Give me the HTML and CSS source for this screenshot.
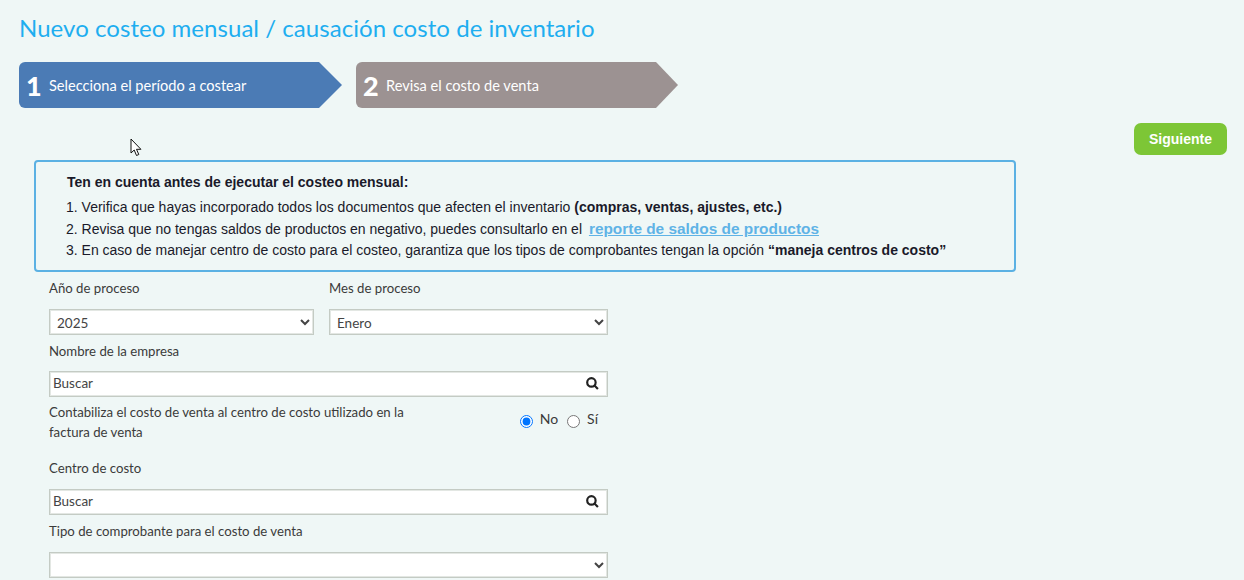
FILE: index.html
```html
<!DOCTYPE html>
<html lang="es">
<head>
<meta charset="utf-8">
<title>Nuevo costeo mensual</title>
<link rel="stylesheet" href="styles.css">
</head>
<body>
<main class="page">
  <h1 class="title">Nuevo costeo mensual / causación costo de inventario</h1>
  <ol class="steps">
    <li class="step step-active"><span class="step-num">1</span><span class="step-text">Selecciona el período a costear</span></li>
    <li class="step step-idle"><span class="step-num">2</span><span class="step-text">Revisa el costo de venta</span></li>
  </ol>
  <div class="actions"><button class="next" type="button">Siguiente</button></div>
  <section class="notice">
    <p class="notice-title">Ten en cuenta antes de ejecutar el costeo mensual:</p>
    <p class="notice-line">1. Verifica que hayas incorporado todos los documentos que afecten el inventario <b>(compras, ventas, ajustes, etc.)</b></p>
    <p class="notice-line">2. Revisa que no tengas saldos de productos en negativo, puedes consultarlo en el <a class="notice-link" href="#">reporte de saldos de productos</a></p>
    <p class="notice-line">3. En caso de manejar centro de costo para el costeo, garantiza que los tipos de comprobantes tengan la opción <b>“maneja centros de costo”</b></p>
  </section>
  <form class="form">
    <div class="two-cols">
      <div class="field">
        <label class="label" for="anio">Año de proceso</label>
        <select class="control select-box" id="anio"><option>2025</option></select>
      </div>
      <div class="field">
        <label class="label" for="mes">Mes de proceso</label>
        <select class="control select-box" id="mes"><option>Enero</option></select>
      </div>
    </div>
    <div class="field field-tight">
      <label class="label">Nombre de la empresa</label>
      <div class="control search-box"><span>Buscar</span><svg class="lens" viewBox="0 0 12 12"><circle cx="5" cy="5" r="3.9" /><path d="M7.8 7.8L11 11" /></svg></div>
    </div>
    <div class="radio-row">
      <p class="radio-label">Contabiliza el costo de venta al centro de costo utilizado en la factura de venta</p>
      <div class="radios">
        <input class="radio" type="radio" name="cc" checked><span class="radio-text radio-text-no">No</span>
        <input class="radio" type="radio" name="cc"><span class="radio-text">Sí</span>
      </div>
    </div>
    <div class="field">
      <label class="label">Centro de costo</label>
      <div class="control search-box search-box-low"><span>Buscar</span><svg class="lens" viewBox="0 0 12 12"><circle cx="5" cy="5" r="3.9" /><path d="M7.8 7.8L11 11" /></svg></div>
    </div>
    <div class="field field-tight">
      <label class="label" for="tipo">Tipo de comprobante para el costo de venta</label>
      <select class="control select-box" id="tipo"><option></option></select>
    </div>
  </form>
  <svg class="cursor" viewBox="0 0 13 19"><path d="M1 1v14l3.2-3 2.3 5.5 2.3-1-2.3-5.2h4.4z" /></svg>
</main>
</body>
</html>
```
FILE: styles.css
```css
* { box-sizing: border-box; }
html, body { margin: 0; height: 580px; overflow: hidden; }
body { background: #eff7f6; font-family: "Lato", "Noto Sans", sans-serif; color: #3b3b3b; }
.page { position: relative; padding: 13px 17px 0 19px; height: 580px; overflow: hidden; }
.title { margin: 0 0 0 1px; font-size: 24px; line-height: 30px; font-weight: 400; color: #1eaef0; letter-spacing: 0.05px; white-space: nowrap; text-indent: -1px; }
.steps { list-style: none; margin: 19px 0 0; padding: 0; display: flex; gap: 14px; }
.step { width: 323px; height: 46px; display: flex; align-items: center; padding-left: 7px; color: #fff; border-radius: 6px 0 0 6px; clip-path: polygon(0 0, 300px 0, 100% 50%, 300px 100%, 0 100%); }
.step-idle { width: 322px; }
.step-active { background: #4b7bb5; }
.step-idle { background: #9c9292; }
.step-num { font-weight: 900; font-size: 27px; line-height: 1; width: 23px; margin-top: 0; }
.step-text { font-size: 14.6px; }
.actions { display: flex; justify-content: flex-end; margin-top: 15px; }
.next { width: 93px; height: 32px; border: 0; border-radius: 7px; background: #7dc636; color: #fff; font: 700 14px "Liberation Sans", sans-serif; padding: 0; }
.notice { width: 982px; height: 112px; margin: 5px 0 0 15px; padding: 10px 0 0 31px; border: 2px solid #5bb1e3; border-radius: 4px; font: 14px/21px "Liberation Sans", sans-serif; color: #1a1a2a; }
.notice p { margin: 0; white-space: nowrap; }
.notice-title { font-weight: 700; margin-bottom: 4px !important; }
.notice-line { margin-left: -1px !important; }
.notice-link { font-weight: 700; font-size: 15.4px; color: #5fb3e6; margin-left: 3px; }
.form { width: 559px; margin: 5px 0 0 30px; }
.two-cols { display: grid; grid-template-columns: 265px 279px; column-gap: 15px; }
.label { display: block; height: 21px; font-size: 13.2px; line-height: 21px; }
.field { padding-top: 1px; }
.field-tight { padding-top: 6px; }
.control { display: flex; width: 100%; height: 26px; margin-top: 10px; background: #fff; border: 1px solid #c4cbc4; box-shadow: inset 0 0 0 1px #e3e7e3; font-family: "Lato", sans-serif; font-size: 13.5px; color: #444; align-items: center; justify-content: space-between; }
.select-box { padding: 1px 3px 0; border-radius: 0; }
.search-box { padding: 0 8px 2px 3px; margin-top: 9px; }
.search-box-low { margin-top: 10px; }
.lens { width: 13px; height: 13px; fill: none; stroke: #222; stroke-width: 2; }
.radio-row { display: flex; justify-content: space-between; margin-top: 5px; }
.radio-label { margin: 0; width: 370px; font-size: 13.2px; line-height: 20px; }
.radios { display: flex; align-items: center; height: 21px; padding-right: 10px; font-size: 14px; margin-top: 6px; }
.radio { width: 13px; height: 13px; margin: 5px 0 0; }
.radio-text { margin: 0 7px; }
.radio-text-no { margin-right: 9px; }
.radio-text:last-child { margin-right: 0; }
.radio-row + .field { margin-top: 15px; }
.cursor { position: absolute; left: 130px; top: 138px; width: 13px; height: 19px; fill: #fff; stroke: #111; stroke-width: 1; }
```
